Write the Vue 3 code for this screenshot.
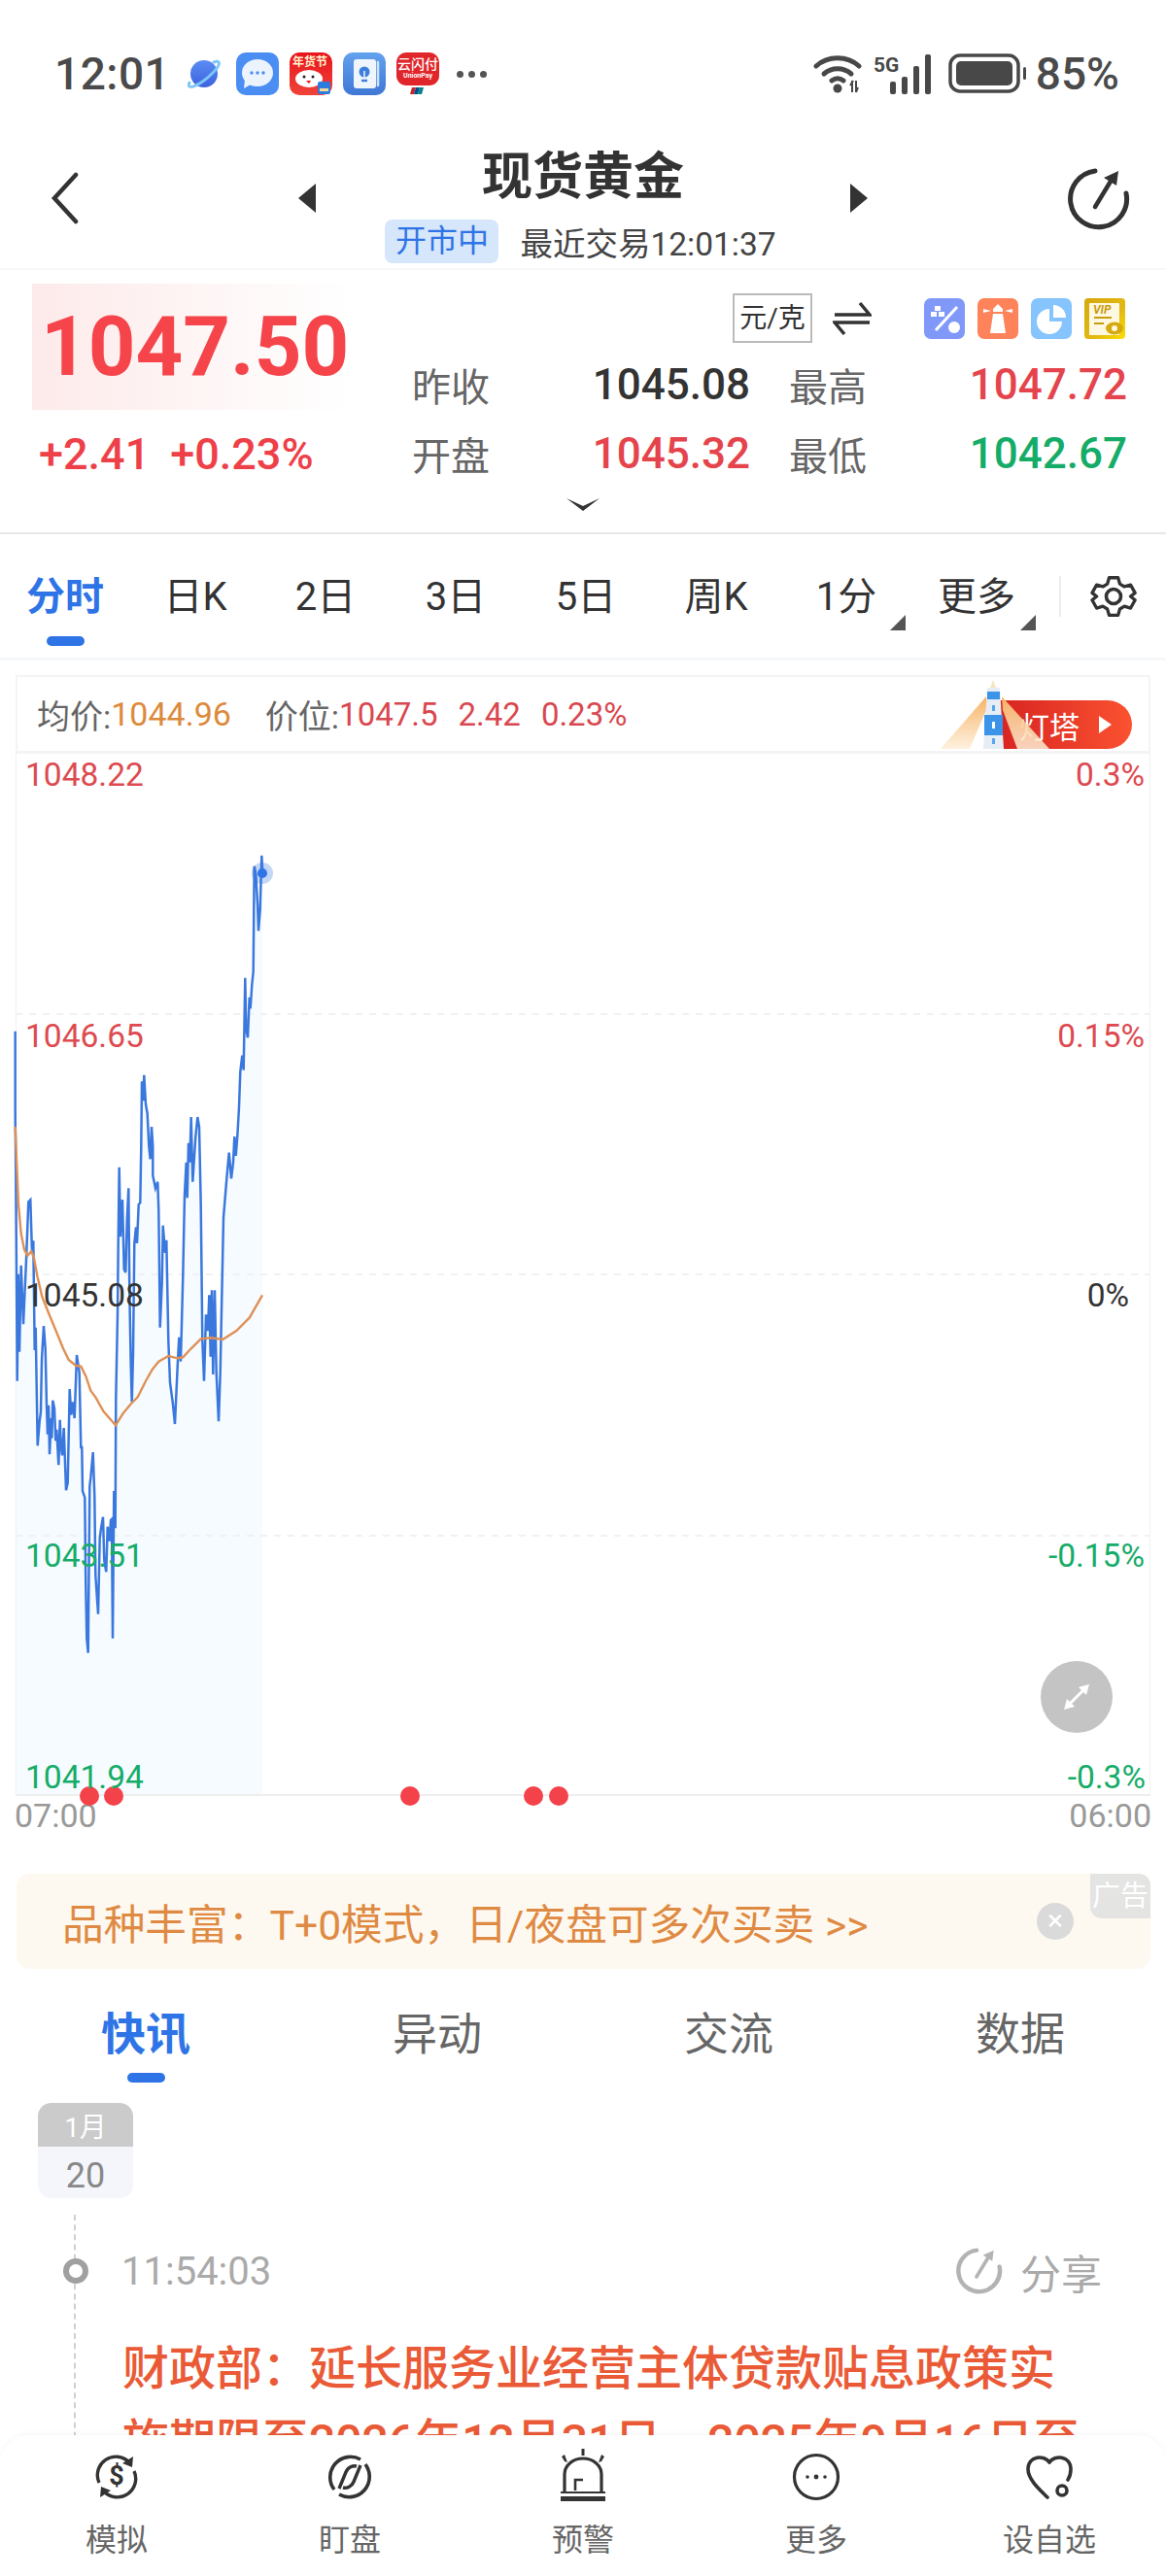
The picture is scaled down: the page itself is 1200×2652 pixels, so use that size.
<script setup>
const segments = [
  { b: 860, p: [[47,605],[47,860]] },
  { b: 1180, p: [[49,80],[53,725],[56,395],[60,635],[65,368],[72,550],[80,372],[88,172],[94,166],[99,330],[103,292],[107,630],[110,560],[116,925],[122,850],[126,820],[129,658],[135,555],[140,625]] },
  { b: 1440, p: [[144,20],[147,110],[150,20],[153,172],[158,60],[160,122],[163,5],[168,30],[172,130],[175,95],[181,205],[185,65],[188,145],[192,175],[197,90],[204,283],[209,260]] },
  { b: 1180, p: [[215,750],[220,830],[225,790],[230,840],[237,645],[245,700],[250,930]] },
  { b: 1440, p: [[253,150],[255,285],[262,305],[265,580],[268,740],[272,785],[277,270],[280,245],[287,165],[292,300],[295,545],[303,665],[308,430],[313,395],[318,365],[322,500],[328,535],[332,395],[338,440],[342,375],[345,372],[348,740],[352,285],[356,400],[358,0]] },
  { b: 1180, p: [[363,520],[365,300],[368,65],[372,280],[378,165],[383,380],[388,390],[392,230],[397,130],[400,450],[404,680],[407,790],[411,640],[415,300],[420,250],[423,300],[428,180],[433,175],[436,0]] },
  { b: 860, p: [[438,760],[442,820],[445,740],[450,830],[455,860],[460,960],[464,1000],[468,900],[472,960]] },
  { b: 1180, p: [[472,90],[480,130],[487,110],[490,200],[494,560],[500,420],[503,245],[510,330],[514,290],[520,600],[525,730],[533,790],[540,858],[548,680],[553,590],[558,665],[565,400],[570,150],[575,50],[578,160],[582,-10],[586,50],[590,-90],[595,110],[600,30],[604,-30],[610,-90],[615,-60],[620,180],[625,600],[630,725],[636,520],[642,570],[646,460],[650,650],[654,445],[658,705],[663,445],[668,700],[675,850],[680,700],[685,465],[690,220],[700,100],[707,20],[714,100],[720,50],[724,-30],[728,30],[733,-30]] },
  { b: 860, p: [[738,840],[742,730],[748,680],[752,725],[757,440],[760,600],[765,625],[770,500],[773,535],[778,462],[782,420],[785,95],[790,120],[795,210],[798,295],[803,230],[808,62],[811,116]] },
]
const pts = segments.flatMap(s => s.p.map(([x, y]) => [+(x / 3).toFixed(1), +(s.b + y / 3).toFixed(1)]))
const line = pts.map(p => p.join(',')).join(' ')
const area = `16,1848 ${line} 270,1848`
const avg = [[47,-60],[52,60],[57,180],[65,270],[75,320],[85,338],[97,325],[105,345],[115,400],[130,465],[150,515],[175,575],[195,625],[212,660],[235,678],[250,680],[265,710],[280,755],[295,775],[320,820],[357,862],[380,825],[405,795],[425,775],[450,725],[470,690],[490,665],[520,648],[548,655],[565,652],[590,625],[620,595],[650,592],[688,597],[730,570],[770,530],[810,460]]
  .map(([x, y]) => `${(x / 3).toFixed(1)},${(1180 + y / 3).toFixed(1)}`).join(' ')

const gridLines = [1044, 1312, 1581]
const dots = [92, 117, 422, 549, 575]
const leftLabels = [
  { t: '1048.22', y: 22, c: 'up' }, { t: '1046.65', y: 291, c: 'up' }, { t: '1045.08', y: 558, c: 'flat' },
  { t: '1043.51', y: 826, c: 'down' }, { t: '1041.94', y: 1054, c: 'down' },
]
const rightLabels = [
  { t: '0.3%', y: 22, c: 'up', r: 6 }, { t: '0.15%', y: 291, c: 'up', r: 6 }, { t: '0%', y: 558, c: 'flat', r: 22 },
  { t: '-0.15%', y: 826, c: 'down', r: 6 }, { t: '-0.3%', y: 1054, c: 'down', r: 5 },
]
const periods = [
  { t: '分时', on: true }, { t: '日K' }, { t: '2日' }, { t: '3日' }, { t: '5日' }, { t: '周K' },
  { t: '1分', more: true }, { t: '更多', more: true },
]
const newsTabs = [{ t: '快讯', on: true }, { t: '异动' }, { t: '交流' }, { t: '数据' }]
</script>

<template>
  <div class="page">
    <div class="status">
      <span class="clock">12:01</span>
      <svg class="s-planet" viewBox="0 0 34 34" width="34" height="34">
        <defs><linearGradient id="pl" x1="0" y1="0" x2="0" y2="1"><stop offset="0" stop-color="#5b8cf5"/><stop offset="1" stop-color="#3d62dc"/></linearGradient></defs>
        <circle cx="17" cy="17" r="14" fill="url(#pl)"/>
        <path d="M27 5c5-2 7 0 4 5-4 6-16 17-25 20-4 1-6 0-4-4" fill="none" stroke="#7cc7f7" stroke-width="3" stroke-linecap="round"/>
      </svg>
      <svg class="s-app" viewBox="0 0 44 44" width="44" height="44">
        <rect width="44" height="44" rx="10" fill="#4a8df3"/>
        <ellipse cx="22" cy="21" rx="16" ry="14" fill="#eaf3fe"/>
        <path d="M9 28l-1 9 9-5z" fill="#eaf3fe"/>
        <circle cx="16" cy="21" r="1.7" fill="#4a8df3"/><circle cx="22" cy="21" r="1.7" fill="#4a8df3"/><circle cx="28" cy="21" r="1.7" fill="#4a8df3"/>
      </svg>
      <svg class="s-app" viewBox="0 0 44 44" width="44" height="44">
        <defs><linearGradient id="nh" x1="0" y1="0" x2="0" y2="1"><stop offset="0" stop-color="#e8141c"/><stop offset="1" stop-color="#f0433a"/></linearGradient></defs>
        <rect width="44" height="44" rx="10" fill="url(#nh)"/>
        <text x="21" y="14" class="mini" fill="#fff3cf">年货节</text>
        <ellipse cx="20" cy="27" rx="14" ry="9" fill="#fff"/>
        <circle cx="15" cy="25" r="1.5" fill="#222"/><circle cx="24" cy="25" r="1.5" fill="#222"/>
        <path d="M17 29h5l-2 3z" fill="#e8141c"/>
        <rect x="29" y="30" width="13" height="13" rx="2" fill="#2e7be0"/>
        <rect x="31" y="37" width="9" height="3" fill="#f3dc9a"/>
      </svg>
      <svg class="s-app" viewBox="0 0 44 44" width="44" height="44">
        <defs><linearGradient id="bb" x1="0" y1="0" x2="0" y2="1"><stop offset="0" stop-color="#63a2ee"/><stop offset="1" stop-color="#3f77d6"/></linearGradient></defs>
        <rect width="44" height="44" rx="10" fill="url(#bb)"/>
        <rect x="11" y="7" width="23" height="30" rx="3" fill="#eef5fd"/>
        <path d="M36 10v24" stroke="#cfe2f8" stroke-width="2.5" stroke-linecap="round"/>
        <circle cx="22" cy="20" r="5.5" fill="#3f7fdc"/><path d="M19 29h6" stroke="#3f7fdc" stroke-width="2.5"/><path d="M22 19v7" stroke="#eef5fd" stroke-width="1.5"/>
      </svg>
      <svg class="s-app union" viewBox="0 0 44 44" width="44" height="44">
        <path d="M10 0h24a10 10 0 0 1 10 10v14c0 6-5 10-10 10H10C5 34 0 30 0 24V10A10 10 0 0 1 10 0z" fill="#e0262b"/>
        <text x="22" y="17" class="mini2" fill="#fff">云闪付</text>
        <text x="22" y="26" class="mini3" fill="#fff">UnionPay</text>
        <path d="M16 36h4l-2 7h-4z" fill="#c8232c"/><path d="M20 36h4l-2 7h-4z" fill="#004f8b"/><path d="M24 36h4l-2 7h-4z" fill="#00838a"/>
      </svg>
      <span class="s-dots"><i></i><i></i><i></i></span>
      <span class="s-right">
        <svg viewBox="0 0 52 42" width="52" height="42">
          <g fill="none" stroke="#484848" stroke-width="5" stroke-linecap="round">
            <path d="M3 13c12-11 32-11 44 0"/><path d="M11 21c8-7 20-7 28 0"/><path d="M19 28c4-3 8-3 12 0"/>
          </g>
          <circle cx="25" cy="36" r="4.5" fill="#484848"/>
          <path d="M40 28v12M44 40V28M38 33l3-5M46 35l-2 5" stroke="#484848" stroke-width="2" fill="none"/>
        </svg>
        <svg viewBox="0 0 60 42" width="60" height="42" class="s-signal">
          <text x="0" y="19" class="g5" fill="#484848">5G</text>
          <rect x="17" y="29" width="6" height="13" rx="2" fill="#484848"/>
          <rect x="29" y="24" width="6" height="18" rx="2" fill="#484848"/>
          <rect x="41" y="13" width="6" height="29" rx="2" fill="#484848"/>
          <rect x="53" y="1" width="6" height="41" rx="2" fill="#484848"/>
        </svg>
        <svg viewBox="0 0 84 42" width="84" height="42" class="s-batt">
          <rect x="2" y="2" width="70" height="37" rx="10" fill="none" stroke="#484848" stroke-width="3.5"/>
          <rect x="8" y="8" width="58" height="25" rx="5" fill="#484848"/>
          <rect x="77" y="14" width="3" height="13" rx="1.5" fill="#484848"/>
        </svg>
        <span class="pct">85%</span>
      </span>
    </div>

    <header class="head">
      <svg class="h-back" viewBox="0 0 30 54" width="30" height="54"><path d="M26 3L4 27l22 24" fill="none" stroke="#333" stroke-width="4.5" stroke-linecap="round"/></svg>
      <svg class="h-tri" viewBox="0 0 20 30" width="20" height="30"><path d="M19 0v30L1 15z" fill="#333"/></svg>
      <div class="h-mid">
        <div class="h-title">现货黄金</div>
        <div class="h-sub"><span class="tag">开市中</span><span class="h-time">最近交易12:01:37</span></div>
      </div>
      <svg class="h-tri" viewBox="0 0 20 30" width="20" height="30"><path d="M1 0v30l18-15z" fill="#333"/></svg>
      <svg class="h-share" viewBox="0 0 66 68" width="66" height="68">
        <path d="M29 5A29 29 0 1 0 61 28" fill="none" stroke="#333" stroke-width="5" stroke-linecap="round"/>
        <path d="M29 42l17-28" stroke="#333" stroke-width="4.5" stroke-linecap="round"/>
        <path d="M53 5l-15 7 13 8z" fill="#333"/>
      </svg>
    </header>

    <section class="quote">
      <div class="q-row">
        <div class="q-left">
          <div class="price-box">1047.50</div>
          <div class="change"><span>+2.41</span><span>+0.23%</span></div>
        </div>
        <div class="q-right">
          <div class="tools">
            <span class="unit">元/克</span>
            <svg class="swap" viewBox="0 0 40 36" width="40" height="36">
              <path d="M2 14h36L28 2M38 22H2l10 12" fill="none" stroke="#333" stroke-width="3.5"/>
            </svg>
            <div class="tool-icons">
              <svg viewBox="0 0 42 42" width="42" height="42">
                <rect width="42" height="42" rx="7" fill="#8099f9"/>
                <rect x="11" y="8" width="6" height="5" fill="#fff"/><rect x="7" y="14" width="6" height="5" fill="#fff"/><rect x="15" y="14" width="6" height="5" fill="#fff"/>
                <path d="M12 33l22-24" stroke="#fff" stroke-width="3"/>
                <circle cx="31" cy="30" r="6" fill="#fff"/>
              </svg>
              <svg viewBox="0 0 42 42" width="42" height="42">
                <rect width="42" height="42" rx="7" fill="#fe825a"/>
                <path d="M21 6l5 5v3H16v-3zM16 16h10l3 20H13z" fill="#fff"/>
                <path d="M6 11l8 2-8 2zM36 11l-8 2 8 2z" fill="#fff"/>
              </svg>
              <svg viewBox="0 0 42 42" width="42" height="42">
                <rect width="42" height="42" rx="7" fill="#86c4fe"/>
                <path d="M19 11a13 13 0 1 0 13 13H19z" fill="#fff"/>
                <path d="M23 7a13 13 0 0 1 13 13H23z" fill="#fff"/>
              </svg>
              <svg viewBox="0 0 42 42" width="42" height="42">
                <defs><linearGradient id="vp" x1="0" y1="0" x2="1" y2="1"><stop offset="0" stop-color="#d4a80e"/><stop offset=".6" stop-color="#e2b912"/><stop offset="1" stop-color="#fbe000"/></linearGradient></defs>
                <rect width="42" height="42" rx="4" fill="url(#vp)"/>
                <rect x="5" y="5" width="31" height="33" rx="1" fill="#fff8e1"/>
                <text x="9" y="16" class="vip" fill="#c79c0d">VIP</text>
                <path d="M10 20h18M10 26h10" stroke="#c79c0d" stroke-width="2"/>
                <ellipse cx="31" cy="31" rx="9" ry="6.5" fill="#d5aa10"/><circle cx="31" cy="31" r="3" fill="#fff8e1"/>
              </svg>
            </div>
          </div>
          <div class="stats">
            <span class="st-l">昨收</span><span class="st-v flat">1045.08</span><span class="st-l st-l2">最高</span><span class="st-v up">1047.72</span>
            <span class="st-l">开盘</span><span class="st-v up">1045.32</span><span class="st-l st-l2">最低</span><span class="st-v down">1042.67</span>
          </div>
        </div>
      </div>
      <svg class="chev" viewBox="0 0 34 14" width="34" height="14"><path d="M0 1l17 8L34 1 17 14z" fill="#333"/></svg>
    </section>

    <nav class="periods">
      <div v-for="p in periods" :key="p.t" class="per" :class="{ on: p.on }">
        <span class="per-t">{{ p.t }}</span>
        <i v-if="p.on" class="bar"></i>
        <i v-if="p.more" class="corner"></i>
      </div>
      <span class="per-div"></span>
      <svg class="gear" viewBox="0 0 48 48" width="48" height="48">
        <path d="M19 3h10l2 7 5 3 7-2 5 9-5 4 0 0 5 4-5 9-7-2-5 3-2 7H19l-2-7-5-3-7 2-5-9 5-4-5-4 5-9 7 2 5-3z" transform="translate(2 2) scale(.92)" fill="none" stroke="#333" stroke-width="3.6" stroke-linejoin="round"/>
        <circle cx="24" cy="24" r="7.5" fill="none" stroke="#333" stroke-width="3.6"/>
      </svg>
    </nav>

    <div class="info">
      <span class="i-l">均价:</span><span class="i-o">1044.96</span>
      <span class="i-l i-gap">价位:</span><span class="i-r">1047.5</span><span class="i-r i-sp">2.42</span><span class="i-r i-sp">0.23%</span>
      <span class="dt"><span>灯塔</span><i></i></span>
      <svg class="tower" viewBox="960 695 130 81" width="130" height="81">
        <defs>
          <linearGradient id="bm" x1="0" y1="0" x2="0" y2="1"><stop offset="0" stop-color="#f7b263"/><stop offset="1" stop-color="#fdeed8" stop-opacity=".85"/></linearGradient>
        </defs>
        <path d="M1015 717L968 771h30l17-40z" fill="url(#bm)"/>
        <path d="M1031 717l49 54h-33l-15-40z" fill="url(#bm)"/>
        <path d="M1022 700l3 8h-6z" fill="#f7e4c2"/>
        <path d="M1016 708h13l4 63h-21z" fill="#e6edf5"/>
        <rect x="1016" y="712" width="13" height="8" fill="#3b94e8"/>
        <rect x="1013" y="736" width="19" height="21" fill="#3b94e8"/>
        <rect x="1021" y="726" width="3" height="6" fill="#5aa5ee"/><rect x="1021" y="743" width="3" height="7" fill="#fff"/><rect x="1021" y="760" width="3" height="6" fill="#5aa5ee"/>
      </svg>
    </div>

    <div class="chart">
      <svg class="plot" viewBox="16 776 1168 1080" width="1168" height="1080">
        <polygon :points="area" fill="#f5fbff"/>
        <line v-for="y in gridLines" :key="y" x1="16" x2="1184" :y1="y" :y2="y" stroke="#f1f1f1" stroke-width="2" stroke-dasharray="7 7"/>
        <path d="M16.5 776V1848M1183.5 776V1848" stroke="#f2f2f2" stroke-width="1"/>
        <path d="M16 1848H1184" stroke="#eeeeee" stroke-width="2"/>
        <polyline :points="line" fill="none" stroke="#3b78de" stroke-width="2.5"/>
        <polyline :points="avg" fill="none" stroke="#df9057" stroke-width="2.4"/>
        <circle cx="270" cy="899" r="11" fill="#3b78de" fill-opacity=".3"/>
        <circle cx="270" cy="899" r="5" fill="#2f74e6"/>
        <circle v-for="x in dots" :key="x" :cx="x" cy="1849" r="10" fill="#f4424a"/>
      </svg>
      <span v-for="l in leftLabels" :key="l.t" class="ax ax-l" :class="l.c" :style="{ top: l.y + 'px' }">{{ l.t }}</span>
      <span v-for="l in rightLabels" :key="l.t" class="ax" :class="l.c" :style="{ top: l.y + 'px', right: l.r + 'px' }">{{ l.t }}</span>
      <span class="expand">
        <svg viewBox="0 0 74 74" width="74" height="74">
          <path d="M27 47l20-20" stroke="#fff" stroke-width="3"/>
          <path d="M50 24l-11 3 8 8zM24 50l11-3-8-8z" fill="#fff"/>
        </svg>
      </span>
    </div>

    <div class="times"><span>07:00</span><span>06:00</span></div>

    <div class="ad">
      <span class="ad-t">品种丰富：T+0模式，日/夜盘可多次买卖 &gt;&gt;</span>
      <span class="ad-x">×</span>
      <span class="ad-tag">广告</span>
    </div>

    <div class="ntabs">
      <div v-for="t in newsTabs" :key="t.t" class="nt" :class="{ on: t.on }">
        <span>{{ t.t }}</span>
        <i v-if="t.on"></i>
      </div>
    </div>

    <div class="date"><span class="d-m">1月</span><span class="d-d">20</span></div>

    <div class="news">
      <div class="n-row">
        <i class="n-dot"></i>
        <span class="n-time">11:54:03</span>
        <span class="n-share">
          <svg viewBox="0 0 66 68" width="50" height="50">
            <path d="M29 5A29 29 0 1 0 61 28" fill="none" stroke="#b3b3b3" stroke-width="6" stroke-linecap="round"/>
            <path d="M29 42l17-28" stroke="#b3b3b3" stroke-width="5" stroke-linecap="round"/>
            <path d="M53 5l-15 7 13 8z" fill="#b3b3b3"/>
          </svg>
          分享
        </span>
      </div>
      <p class="n-title">财政部：延长服务业经营主体贷款贴息政策实<br>施期限至2026年12月31日，2025年9月16日至</p>
    </div>

    <footer class="tabbar">
      <div class="tb">
        <svg viewBox="0 0 50 50" width="50" height="50">
          <path d="M7 31A19 19 0 0 1 38 10M43 19A19 19 0 0 1 12 40" fill="none" stroke="#333" stroke-width="3.4"/>
          <path d="M42 4l-1 11-10-4zM8 46l1-11 10 4z" fill="#333"/>
          <text x="25" y="33" class="dollar" fill="#333">$</text>
        </svg>
        <span>模拟</span>
      </div>
      <div class="tb">
        <svg viewBox="0 0 50 50" width="50" height="50">
          <path d="M9 38A21 21 0 0 1 36 7M41 12A21 21 0 0 1 14 43" fill="none" stroke="#333" stroke-width="3.6"/>
          <path d="M14 37l7-17c2-5 7-7 11-6M36 13l-7 17c-2 5-7 7-11 6" fill="none" stroke="#333" stroke-width="3.4"/>
        </svg>
        <span>盯盘</span>
      </div>
      <div class="tb">
        <svg viewBox="0 0 50 54" width="50" height="54" class="tb-al">
          <path d="M6 44V26a19 16 0 0 1 38 0v18" fill="none" stroke="#333" stroke-width="3.2"/>
          <path d="M17 43V32h8" fill="none" stroke="#333" stroke-width="2.6"/>
          <rect x="2" y="44" width="46" height="2" fill="#333"/><rect x="2" y="49" width="46" height="5" fill="#333"/>
          <path d="M25 0v7" stroke="#333" stroke-width="3"/>
          <path d="M3 8l3-2 3 8-3-1zM47 8l-3-2-3 8 3-1z" fill="#333"/>
        </svg>
        <span>预警</span>
      </div>
      <div class="tb">
        <svg viewBox="0 0 50 50" width="50" height="50">
          <circle cx="25" cy="25" r="22.5" fill="none" stroke="#333" stroke-width="3.2"/>
          <circle cx="16" cy="25" r="1.8" fill="#333"/><circle cx="25" cy="25" r="2.4" fill="#333"/><circle cx="34" cy="25" r="1.8" fill="#333"/>
        </svg>
        <span>更多</span>
      </div>
      <div class="tb">
        <svg viewBox="0 0 50 50" width="50" height="50">
          <path d="M25 10C20 2 3 3 3 17c0 11 13 22 20 29M25 10c5-8 22-7 22 7 0 4-1 8-3 11" fill="none" stroke="#333" stroke-width="3.6" stroke-linecap="round"/>
          <circle cx="38" cy="39" r="5" fill="none" stroke="#333" stroke-width="3.6"/>
        </svg>
        <span>设自选</span>
      </div>
    </footer>
  </div>
</template>

<style>
body { margin: 0; background: #fff; }
</style>

<style scoped>
.page {
  position: relative;
  width: 1200px;
  height: 2652px;
  overflow: hidden;
  background: #fff;
  font-family: Roboto, "Noto Sans CJK SC", sans-serif;
  color: #333;
}
i { display: block; font-style: normal; }
svg { display: block; flex: none; }

.status { height: 152px; display: flex; align-items: center; padding-left: 56px; box-sizing: border-box; }
.clock { width: 136px; font-size: 46px; font-weight: 500; color: #4a4a4a; letter-spacing: 0.5px; }
.s-planet { margin-right: 16px; margin-left: 1px; }
.s-app { margin-right: 11px; }
.mini { font-size: 12px; font-weight: 700; text-anchor: middle; font-family: "Noto Sans CJK SC", sans-serif; }
.mini2 { font-size: 14px; font-weight: 500; text-anchor: middle; font-family: "Noto Sans CJK SC", sans-serif; }
.mini3 { font-size: 7px; font-weight: 700; text-anchor: middle; }
.s-dots { display: flex; gap: 5px; margin-left: 7px; }
.s-dots i { width: 7px; height: 7px; border-radius: 50%; background: #555; }
.s-right { margin-left: auto; display: flex; align-items: center; padding-right: 48px; }
.s-signal { margin-left: 10px; }
.s-batt { margin-left: 17px; }
.g5 { font-size: 21px; font-weight: 700; font-family: "Liberation Sans Narrow", Roboto, sans-serif; }
.pct { font-size: 46px; font-weight: 500; color: #4a4a4a; margin-left: 6px; }

.head {
  height: 126px;
  box-sizing: border-box;
  border-bottom: 2px solid #f7f7f7;
  display: flex;
  align-items: flex-start;
  padding-left: 52px;
}
.h-back { margin-top: 25px; }
.h-tri { margin-top: 37px; }
.h-back + .h-tri { margin-left: 224px; }
.h-mid { width: 548px; display: flex; flex-direction: column; align-items: center; }
.h-title { height: 62px; line-height: 62px; font-size: 52px; font-weight: 700; color: #333; }
.h-sub { margin-top: 10px; display: flex; align-items: center; margin-right: 5px; }
.tag {
  width: 117px; height: 45px; line-height: 45px; text-align: center;
  background: #d6e6fb; color: #2f74e6; font-size: 32px; border-radius: 8px; margin-right: 22px;
}
.h-time { font-size: 33.5px; color: #444; }
.h-share { margin-left: 204px; margin-top: 19px; }

.quote { height: 272px; box-sizing: border-box; border-bottom: 2px solid #e8e8e8; padding-top: 14px; }
.q-row { height: 220px; display: flex; }
.q-left { width: 425px; padding-left: 33px; box-sizing: border-box; }
.price-box {
  width: 330px; height: 130px; line-height: 130px; box-sizing: border-box; padding-left: 9px;
  background: linear-gradient(90deg, #fdeaea, #fff);
  color: #f5454b; font-size: 85px; font-weight: 700;
}
.change {
  margin: 22px 0 0 7px; height: 48px; line-height: 48px; font-size: 45px; font-weight: 500; color: #ee4049;
  display: flex; gap: 21px;
}
.q-right { flex: 1; }
.tools { margin-top: 10px; height: 51px; display: flex; align-items: center; padding-left: 329px; }
.unit {
  width: 82px; height: 51px; line-height: 47px; box-sizing: border-box; text-align: center;
  border: 2px solid #bbb; font-size: 28px; color: #333;
}
.swap { margin-left: 21px; }
.tool-icons { margin-left: 54px; display: flex; gap: 13px; }
.stats {
  margin-top: 7px;
  display: grid;
  grid-template-columns: 100px 247px 121px 267px;
  grid-auto-rows: 71px;
  align-items: center;
}
.st-l2 { padding-left: 41px; }
.st-l { font-size: 40px; color: #666; white-space: nowrap; margin-left: -1px; }
.st-v { font-size: 44px; font-weight: 500; text-align: right; }
.chev { margin: 0 auto; }
.up { color: #dd4a50; }
.down { color: #15ac68; }
.flat { color: #333; }
.st-v.up { color: #e5444c; }

.periods {
  height: 130px; box-sizing: border-box; border-bottom: 3px solid #f6f7f9;
  display: flex;
}
.per { position: relative; width: 134px; padding-top: 40px; box-sizing: border-box; text-align: center; }
.per-t { display: block; height: 50px; line-height: 50px; font-size: 40px; color: #333; }
.per.on .per-t { color: #2f74e6; font-weight: 700; }
.bar { width: 39px; height: 10px; border-radius: 5px; background: #2f74e6; margin: 15px auto 0; }
.corner {
  position: absolute; right: 6px; top: 83px; width: 0; height: 0;
  border-bottom: 16px solid #555; border-left: 16px solid transparent;
}
.per-div { width: 2px; height: 42px; background: #ececec; margin: 43px 0 0 18px; }
.gear { margin: 40px 0 0 30px; }

.info {
  position: relative;
  margin: 15px 16px 0;
  height: 81px; box-sizing: border-box;
  border: 2px solid #f3f4f6; border-bottom-width: 3px;
  display: flex; align-items: center; padding-left: 20px;
  font-size: 34px;
}
.i-l { color: #666; }
.i-o { color: #dd8a3c; }
.i-gap { margin-left: 35px; }
.i-r { color: #d9474f; font-size: 33px; }
.i-sp { margin-left: 21px; }
.dt {
  position: absolute; right: 17px; top: 24px; width: 150px; height: 50px; box-sizing: border-box;
  border-radius: 0 25px 25px 0; background: linear-gradient(90deg, #d42020, #fb5230);
  color: #fff; font-size: 31px; display: flex; align-items: center; padding-left: 34px;
}
.dt i { width: 0; height: 0; margin-left: 20px; border-left: 13px solid #fff; border-top: 9px solid transparent; border-bottom: 9px solid transparent; }
.tower { position: absolute; left: 942px; top: -2px; }

.chart { position: relative; margin: 0 16px; height: 1072px; }
.plot { position: absolute; left: 0; top: 0; overflow: visible; }
.ax { position: absolute; font-size: 33.5px; line-height: 40px; transform: translateY(-20px); }
.ax-l { left: 10px; }
.expand {
  position: absolute; left: 1055px; top: 934px; width: 74px; height: 74px; border-radius: 50%; background: #c4c4c4;
}
.times { margin: 0 15px; height: 42px; display: flex; justify-content: space-between; align-items: center; font-size: 34px; color: #999; }

.ad {
  position: relative;
  margin: 39px 16px 0 17px;
  height: 98px; border-radius: 14px; background: #fef9f0;
  display: flex; align-items: center; padding-left: 47px;
}
.ad-t { font-size: 42.7px; color: #df8a43; }
.ad-x {
  position: absolute; left: 1050px; top: 30px; width: 38px; height: 38px; line-height: 36px; text-align: center;
  border-radius: 50%; background: #dadada; color: #fff; font-size: 30px;
}
.ad-tag {
  position: absolute; right: 0; top: 0; width: 62px; height: 46px; line-height: 46px; text-align: center;
  background: #e4e4e2; color: #fff; font-size: 29px; border-radius: 0 12px 0 12px;
}

.ntabs { display: grid; grid-template-columns: repeat(4, 300px); padding-top: 37px; height: 117px; box-sizing: border-box; }
.nt { text-align: center; }
.nt span { display: block; height: 60px; line-height: 60px; font-size: 46px; color: #666; }
.nt.on span { color: #2f74e6; font-weight: 700; }
.nt i { width: 39px; height: 10px; border-radius: 5px; background: #2f74e6; margin: 10px auto 0; }

.date {
  margin: 21px 0 0 39px; width: 98px; height: 98px; border-radius: 14px; overflow: hidden;
  background: #f4f6fc; display: flex; flex-direction: column; text-align: center;
}
.d-m { height: 45px; line-height: 52px; background: #cbcbcb; color: #fff; font-size: 28px; }
.d-d { flex: 1; line-height: 60px; font-size: 36px; color: #888; }

.news { position: relative; padding-top: 45px; }
.news::before {
  content: ""; position: absolute; left: 76px; top: 17px; height: 240px;
  border-left: 2px dashed #d0d0d0;
}
.n-row { position: relative; height: 60px; display: flex; align-items: center; padding: 0 66px 0 65px; }
.n-dot { width: 26px; height: 26px; box-sizing: border-box; border: 6px solid #a0a0a0; border-radius: 50%; background: #fff; }
.n-time { margin-left: 34px; font-size: 40px; color: #aaa; }
.n-share { margin-left: auto; display: flex; align-items: center; gap: 17px; font-size: 42px; color: #aaa; }
.n-title { margin: 33px 0 0 126px; font-size: 48px; line-height: 75px; font-weight: 500; color: #ea5a36; white-space: nowrap; }

.tabbar {
  position: absolute; left: 0; right: 0; bottom: 0; height: 145px; box-sizing: border-box;
  background: #fff; border-radius: 30px 30px 0 0;
  box-shadow: 0 -2px 6px rgba(0,0,0,.03);
  display: grid; grid-template-columns: repeat(5, 240px); padding-top: 18px;
}
.tb { display: flex; flex-direction: column; align-items: center; }
.tb span { margin-top: 20px; height: 40px; line-height: 40px; font-size: 32px; color: #666; }
.tb-al { margin-top: -4px; }
.dollar { font-size: 27px; font-weight: 700; text-anchor: middle; }
.vip { font-size: 12px; font-weight: 700; font-style: italic; }
</style>
